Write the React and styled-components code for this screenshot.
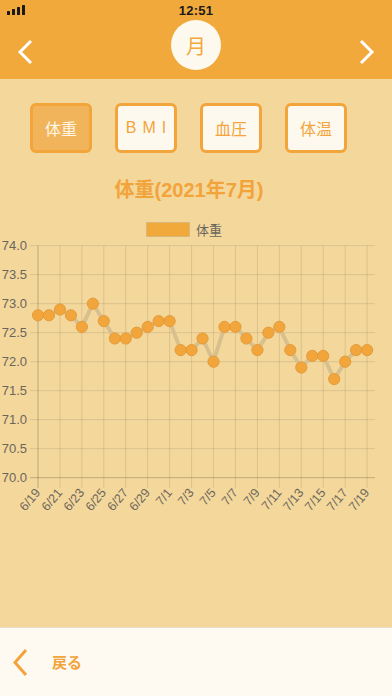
import React, { useState } from "react"
import styled, { createGlobalStyle } from "styled-components"

const GlobalStyle = createGlobalStyle`
  html, body {
    margin: 0;
    padding: 0;
    background: #F4D79B;
    font-family: "Liberation Sans", "Noto Sans CJK JP", sans-serif;
  }
`;

const Screen = styled.div`
  display: flex;
  flex-direction: column;
  width: 392px;
  height: 696px;
  overflow: hidden;
  background: #F4D79B;
`;

const Header = styled.div`
  display: flex;
  flex-direction: column;
  background: #F2A93B;
  height: 79px;
`;

const StatusBar = styled.div`
  position: relative;
  display: flex;
  align-items: center;
  justify-content: center;
  height: 20px;
  font-size: 13px;
  font-weight: bold;
  color: #1a1a1a;
  letter-spacing: 0.3px;
`;

const Signal = styled.div`
  position: absolute;
  left: 7px;
  top: 5px;
  display: flex;
  align-items: flex-end;
  gap: 2px;
  height: 10px;
`;

const SignalBar = styled.span`
  width: 3px;
  height: ${p => p.h}px;
  background: #1a1a1a;
  border-radius: 0.5px;
`;

const NavRow = styled.div`
  display: flex;
  flex-direction: row;
  justify-content: space-between;
  align-items: center;
  padding: 0 14px;
  height: 59px;
`;

const NavArrow = styled.button`
  display: flex;
  align-items: center;
  justify-content: center;
  width: 22px;
  height: 30px;
  margin-top: 4px;
  padding: 0;
  border: none;
  background: none;
`;

const PeriodCircle = styled.div`
  display: flex;
  align-items: center;
  justify-content: center;
  width: 50px;
  height: 50px;
  margin-bottom: 9px;
  border-radius: 50%;
  background: #FEF9EF;
  color: #F2A93B;
  font-size: 20px;
  font-family: "Noto Sans CJK JP", sans-serif;
`;

const Main = styled.div`
  flex: 1;
  display: flex;
  flex-direction: column;
  align-items: center;
  padding-top: 24px;
`;

const Tabs = styled.div`
  display: flex;
  flex-direction: row;
  gap: 23px;
  margin-right: 15px;
`;

const Tab = styled.button`
  box-sizing: border-box;
  width: 62px;
  height: 50px;
  padding: 0;
  border: 3px solid #F2A53B;
  border-radius: 6px;
  background: ${p => (p.active ? "#F1B45A" : "#FEF9EF")};
  color: ${p => (p.active ? "#FFF6E6" : "#F2A53B")};
  font-size: 16px;
  font-family: "Liberation Sans", "Noto Sans CJK JP", sans-serif;
  letter-spacing: ${p => (p.spaced ? "6px" : "0")};
  text-indent: ${p => (p.spaced ? "6px" : "0")};
`;

const Title = styled.div`
  margin-top: 25px;
  margin-right: 14px;
  height: 24px;
  line-height: 24px;
  font-size: 20px;
  font-weight: bold;
  color: #F2A33A;
`;

const Legend = styled.div`
  display: flex;
  flex-direction: row;
  align-items: center;
  gap: 6px;
  margin-top: 19px;
  margin-right: 24px;
  height: 16px;
  font-size: 13px;
  color: #6b665c;
`;

const LegendSwatch = styled.span`
  box-sizing: border-box;
  width: 44px;
  height: 15px;
  background: #F2A93B;
  border: 1.5px solid #D9B777;
`;

const ChartSvg = styled.svg`
  display: block;
  margin-top: 1px;
  width: 392px;
  height: 300px;
`;

const Footer = styled.div`
  display: flex;
  flex-direction: row;
  align-items: center;
  gap: 24px;
  height: 68px;
  padding-left: 12px;
  background: #FEF9F1;
  border-top: 1px solid #E6DCCB;
`;

const BackLabel = styled.span`
  font-size: 15px;
  font-weight: bold;
  color: #F2A33A;
  font-family: "Noto Sans CJK JP", sans-serif;
  padding-bottom: 2px;
`;

const weights = [
  72.8, 72.8, 72.9, 72.8, 72.6, 73.0, 72.7, 72.4, 72.4, 72.5, 72.6, 72.7,
  72.7, 72.2, 72.2, 72.4, 72.0, 72.6, 72.6, 72.4, 72.2, 72.5, 72.6, 72.2,
  71.9, 72.1, 72.1, 71.7, 72.0, 72.2, 72.2,
];

const dayLabel = i => {
  const d = new Date(2021, 5, 19 + i);
  return `${d.getMonth() + 1}/${d.getDate()}`;
};

const X0 = 38;
const DX = 10.97;
const Y_TOP = 245.7;
const UNIT = 58;
const xAt = i => X0 + i * DX;
const yAt = v => Y_TOP + (74 - v) * UNIT;

const Chevron = ({ dir, color, w = 3, h = 22 }) => (
  <svg width="16" height={h + 4} viewBox={`0 0 16 ${h + 4}`}>
    <polyline
      points={dir === "left" ? `14,2 3,${h / 2 + 2} 14,${h + 2}` : `2,2 13,${h / 2 + 2} 2,${h + 2}`}
      fill="none"
      stroke={color}
      strokeWidth={w}
    />
  </svg>
);

const WeightChart = () => {
  const yTicks = [74, 73.5, 73, 72.5, 72, 71.5, 71, 70.5, 70];
  const xTicks = Array.from({ length: 16 }, (_, k) => k * 2);
  const line = weights.map((v, i) => `${xAt(i)},${yAt(v)}`).join(" ");
  return (
    <ChartSvg viewBox="0 238 392 300">
      {yTicks.map(v => (
        <g key={v}>
          <line x1="30" x2="375" y1={yAt(v)} y2={yAt(v)}
            stroke={v === 70 ? "rgba(0,0,0,0.22)" : "rgba(0,0,0,0.1)"} strokeWidth="1" />
          <text x="27" y={yAt(v) + 4.5} textAnchor="end" fontSize="13"
            fill="#6b665c" fontFamily="Liberation Sans, sans-serif">
            {v.toFixed(1)}
          </text>
        </g>
      ))}
      {xTicks.map(i => (
        <g key={i}>
          <line x1={xAt(i)} x2={xAt(i)} y1={Y_TOP} y2="488"
            stroke={i === 0 ? "rgba(0,0,0,0.22)" : "rgba(0,0,0,0.1)"} strokeWidth="1" />
          <text transform={`translate(${xAt(i) + 3} 493) rotate(-50)`}
            textAnchor="end" fontSize="12.5" fill="#6b665c"
            fontFamily="Liberation Sans, sans-serif">
            {dayLabel(i)}
          </text>
        </g>
      ))}
      <polyline points={line} fill="none" stroke="#D8C08E" strokeWidth="4" strokeLinejoin="round" />
      {weights.map((v, i) => (
        <circle key={i} cx={xAt(i)} cy={yAt(v)} r="5.6"
          fill="#F2A53B" stroke="#E39C3A" strokeWidth="1" />
      ))}
    </ChartSvg>
  );
};

const App = () => {
  const [tab, setTab] = useState("体重");
  const tabs = ["体重", "BMI", "血圧", "体温"];
  return (
    <Screen>
      <GlobalStyle />
      <Header>
        <StatusBar>
          <Signal>
            <SignalBar h={4} />
            <SignalBar h={6} />
            <SignalBar h={8} />
            <SignalBar h={10} />
          </Signal>
          12:51
        </StatusBar>
        <NavRow>
          <NavArrow><Chevron dir="left" color="#FFFFFF" /></NavArrow>
          <PeriodCircle>月</PeriodCircle>
          <NavArrow><Chevron dir="right" color="#FFFFFF" /></NavArrow>
        </NavRow>
      </Header>
      <Main>
        <Tabs>
          {tabs.map(t => (
            <Tab key={t} active={tab === t} spaced={t === "BMI"} onClick={() => setTab(t)}>
              {t}
            </Tab>
          ))}
        </Tabs>
        <Title>体重(2021年7月)</Title>
        <Legend>
          <LegendSwatch />
          体重
        </Legend>
        <WeightChart />
      </Main>
      <Footer>
        <Chevron dir="left" color="#F2A33A" h={25} />
        <BackLabel>戻る</BackLabel>
      </Footer>
    </Screen>
  );
};

export default App
